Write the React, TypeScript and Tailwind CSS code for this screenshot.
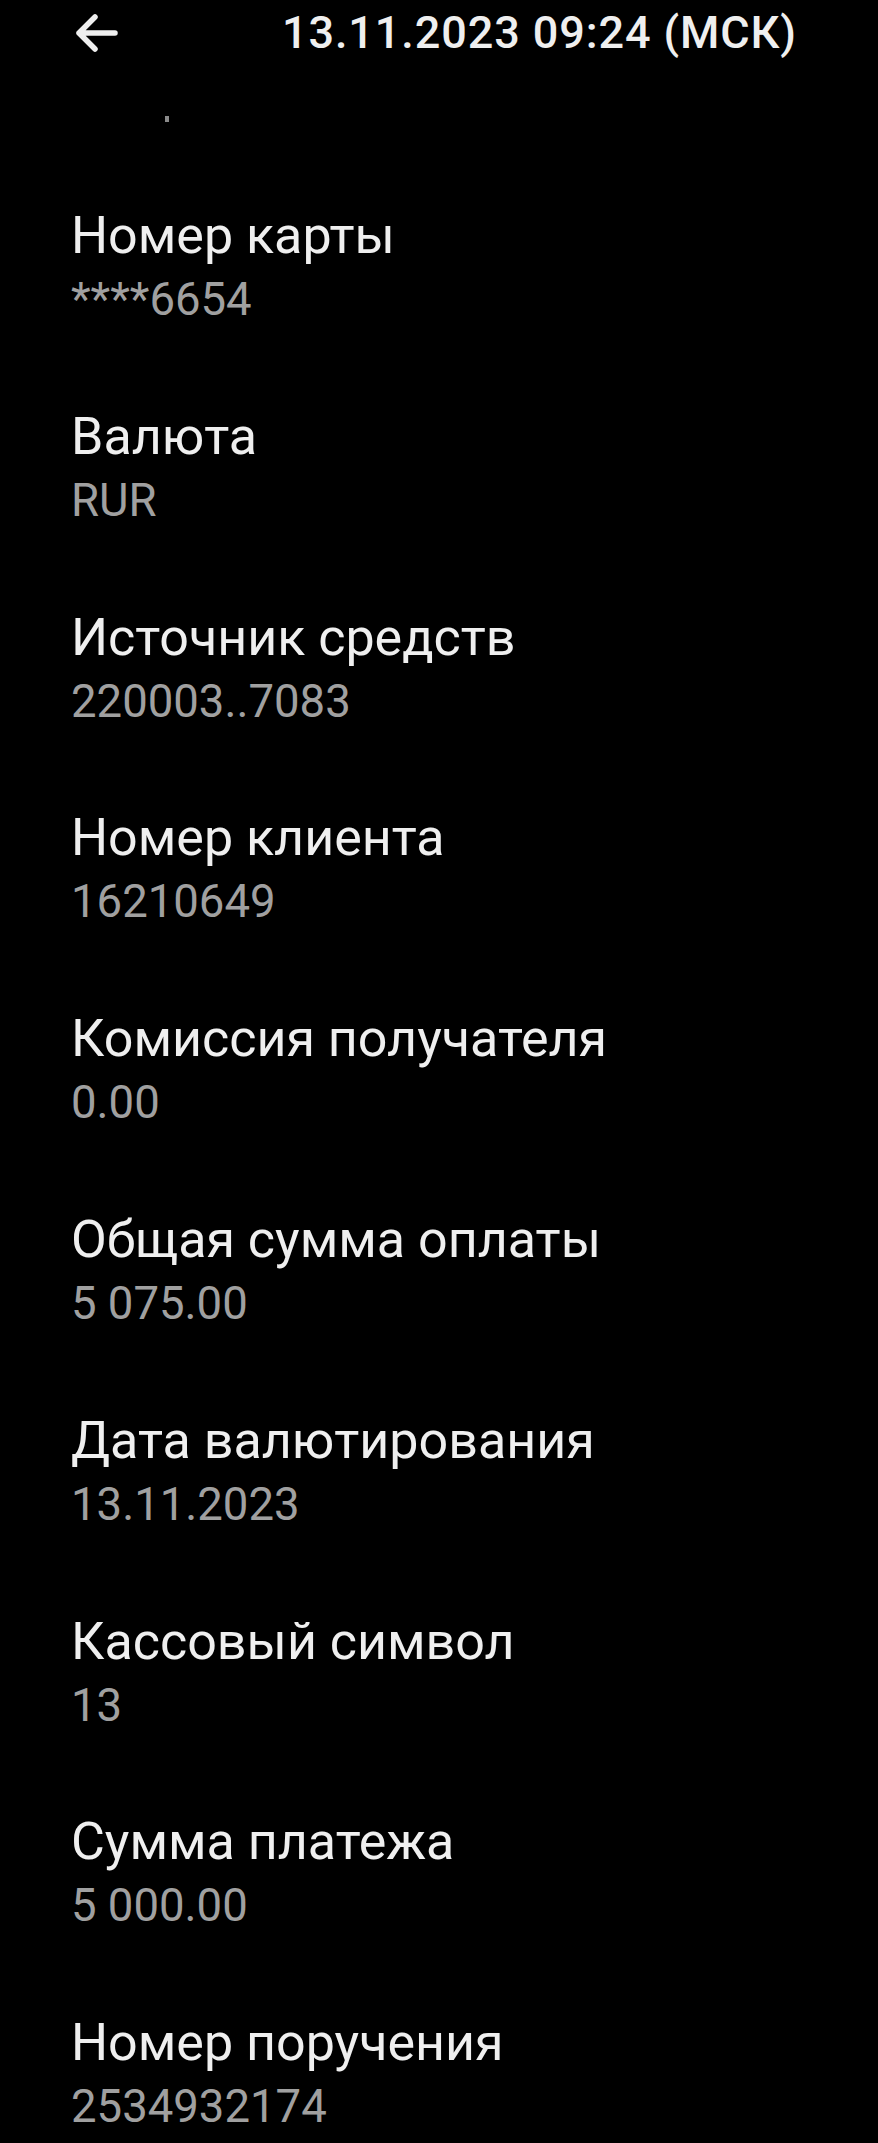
import React from "react";

const rows: [string, string][] = [
  ["Номер карты", "****6654"],
  ["Валюта", "RUR"],
  ["Источник средств", "220003..7083"],
  ["Номер клиента", "16210649"],
  ["Комиссия получателя", "0.00"],
  ["Общая сумма оплаты", "5 075.00"],
  ["Дата валютирования", "13.11.2023"],
  ["Кассовый символ", "13"],
  ["Сумма платежа", "5 000.00"],
  ["Номер поручения", "2534932174"],
];

export default function App() {
  return (
    <div
      className="w-[878px] h-[2143px] bg-black overflow-hidden"
      style={{ fontFamily: "Roboto, 'Noto Sans', sans-serif" }}
    >
      <div className="flex items-center h-[66px]">
        <div className="ml-[75px] w-[43px] h-[40px] flex items-center">
          <svg width="43" height="40" viewBox="0 0 43 40" fill="none">
            <path
              d="M40 20H4M20 4L4 20L20 36"
              stroke="#efefef"
              strokeWidth="5.5"
              strokeLinecap="round"
              strokeLinejoin="round"
            />
          </svg>
        </div>
        <div className="ml-[164px] text-[45px] leading-[66px] font-medium text-[#efefef] tracking-[0.02em] whitespace-nowrap">
          13.11.2023 09:24 (МСК)
        </div>
      </div>
      <div className="h-[138px] relative">
        <div className="absolute left-[165px] top-[50px] w-[4px] h-[6px] bg-[#8a8a8a]" />
      </div>
      <div className="flex flex-col gap-[72.8px] pl-[71px]">
        {rows.map(([label, value]) => (
          <div key={label} className="flex flex-col">
            <div className="text-[52px] leading-[64px] text-[#efefef] whitespace-nowrap">
              {label}
            </div>
            <div className="text-[45.5px] leading-[64px] text-[#a0a0a0] whitespace-nowrap">
              {value}
            </div>
          </div>
        ))}
      </div>
    </div>
  );
}
